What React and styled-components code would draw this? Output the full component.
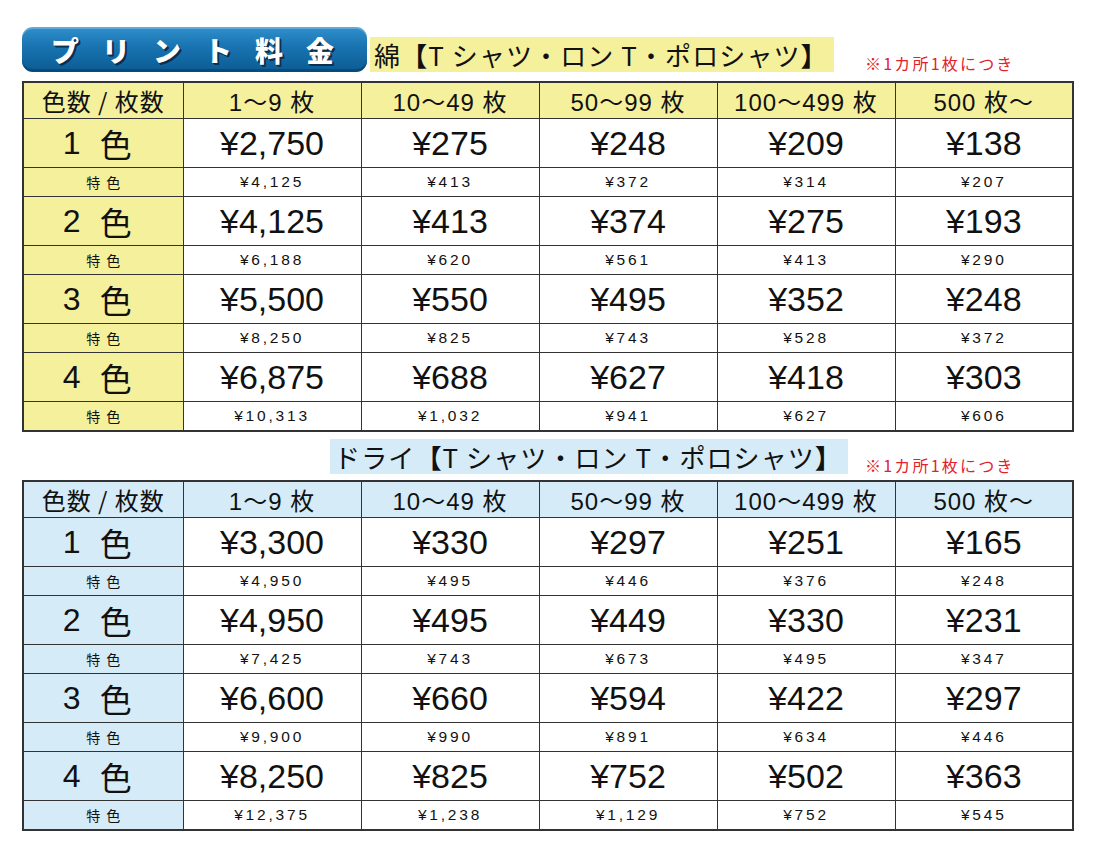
import styled, { createGlobalStyle } from "styled-components";

const GlobalStyle = createGlobalStyle`
  body {
    margin: 0;
    background: #fff;
    font-family: "Liberation Sans", "Noto Sans CJK JP", sans-serif;
    color: #111;
  }
`;

const cols = ["1〜9 枚", "10〜49 枚", "50〜99 枚", "100〜499 枚", "500 枚〜"];

const cotton = [
  { n: 1, main: ["¥2,750", "¥275", "¥248", "¥209", "¥138"], sub: ["¥4,125", "¥413", "¥372", "¥314", "¥207"] },
  { n: 2, main: ["¥4,125", "¥413", "¥374", "¥275", "¥193"], sub: ["¥6,188", "¥620", "¥561", "¥413", "¥290"] },
  { n: 3, main: ["¥5,500", "¥550", "¥495", "¥352", "¥248"], sub: ["¥8,250", "¥825", "¥743", "¥528", "¥372"] },
  { n: 4, main: ["¥6,875", "¥688", "¥627", "¥418", "¥303"], sub: ["¥10,313", "¥1,032", "¥941", "¥627", "¥606"] },
];

const dry = [
  { n: 1, main: ["¥3,300", "¥330", "¥297", "¥251", "¥165"], sub: ["¥4,950", "¥495", "¥446", "¥376", "¥248"] },
  { n: 2, main: ["¥4,950", "¥495", "¥449", "¥330", "¥231"], sub: ["¥7,425", "¥743", "¥673", "¥495", "¥347"] },
  { n: 3, main: ["¥6,600", "¥660", "¥594", "¥422", "¥297"], sub: ["¥9,900", "¥990", "¥891", "¥634", "¥446"] },
  { n: 4, main: ["¥8,250", "¥825", "¥752", "¥502", "¥363"], sub: ["¥12,375", "¥1,238", "¥1,129", "¥752", "¥545"] },
];

const Page = styled.div`
  width: 1051px;
  padding: 27px 0 0 22px;
`;

const TopRow = styled.div`
  display: flex;
  align-items: flex-end;
  padding-right: 58px;
`;

const Banner = styled.div`
  width: 345px;
  height: 45px;
  box-sizing: border-box;
  border-radius: 11px;
  background: linear-gradient(180deg, #2f8fcc 0%, #1873b0 45%, #0b5b93 100%);
  box-shadow: inset 0 -3px 0 rgba(0, 40, 80, 0.35), inset 0 2px 0 rgba(255, 255, 255, 0.25);
  display: flex;
  align-items: center;
  padding-left: 29px;
  color: #fff;
  font-family: "Noto Sans CJK JP", sans-serif;
  font-weight: 900;
  font-size: 28px;
  letter-spacing: 23px;
  text-shadow: 2px 2px 0 #0a2f4f, 1px 1px 0 #0a2f4f;
`;

const Title = styled.div`
  height: 35px;
  display: flex;
  align-items: center;
  padding: 0 6px 0 4px;
  margin-left: ${(p) => p.$gap || 0}px;
  background: ${(p) => p.$bg};
  font-family: "Noto Sans CJK JP", sans-serif;
  font-size: 26px;
  font-weight: 400;
  letter-spacing: 1.1px;
  color: #111;
  white-space: nowrap;
`;

const Bracket = styled.span`
  font-weight: 900;
`;

const Note = styled.div`
  margin-left: ${(p) => (p.$auto ? "auto" : "0")};
  width: 150px;
  font-family: "Noto Sans CJK JP", sans-serif;
  font-size: 16px;
  color: #e3202b;
  letter-spacing: 2.2px;
  line-height: 1;
  padding-bottom: 1px;
  white-space: nowrap;
`;

const SubRow = styled.div`
  display: flex;
  align-items: flex-end;
  justify-content: flex-end;
  gap: 17px;
  margin-top: 7px;
  padding-right: 58px;
`;

const Table = styled.table`
  width: 1051px;
  margin-top: ${(p) => p.$mt}px;
  border-collapse: collapse;
  table-layout: fixed;
  border: 2px solid #333;
`;

const Cell = styled.td`
  border: 1.5px solid #333;
  text-align: center;
  padding: 0;
  background: ${(p) => (p.$shade ? p.$bg : "#fff")};
`;

const HeadCell = styled(Cell)`
  height: 35px;
  font-family: "Liberation Sans", "Noto Sans CJK JP", sans-serif;
  font-size: 24px;
  letter-spacing: 1px;
`;

const MainCell = styled(Cell)`
  height: 48px;
  font-size: 34px;
`;

const SubCell = styled(Cell)`
  height: 28px;
  font-size: 15.5px;
  letter-spacing: 2.8px;
`;

const RowLabel = styled.div`
  display: flex;
  justify-content: center;
  align-items: center;
  gap: 19px;
  font-size: 32px;
  padding-right: 12px;
`;

const LabelChar = styled.span`
  font-family: "Noto Sans CJK JP", sans-serif;
  font-weight: 400;
`;

const Tokushoku = styled.span`
  font-family: "Noto Sans CJK JP", sans-serif;
  font-size: 14px;
  letter-spacing: 6px;
  padding-left: 6px;
`;

const PriceTable = ({ rows, bg, mt }) => (
  <Table $mt={mt}>
    <colgroup>
      <col style={{ width: 160 }} />
      {cols.map((c) => (
        <col key={c} style={{ width: 178 }} />
      ))}
    </colgroup>
    <tbody>
      <tr>
        <HeadCell $shade $bg={bg}>
          <LabelChar>色数 / 枚数</LabelChar>
        </HeadCell>
        {cols.map((c) => (
          <HeadCell key={c} $shade $bg={bg}>
            {c}
          </HeadCell>
        ))}
      </tr>
      {rows.map((r) => [
        <tr key={`m${r.n}`}>
          <MainCell $shade $bg={bg}>
            <RowLabel>
              <span>{r.n}</span>
              <LabelChar>色</LabelChar>
            </RowLabel>
          </MainCell>
          {r.main.map((v, i) => (
            <MainCell key={i}>{v}</MainCell>
          ))}
        </tr>,
        <tr key={`s${r.n}`}>
          <SubCell $shade $bg={bg}>
            <Tokushoku>特色</Tokushoku>
          </SubCell>
          {r.sub.map((v, i) => (
            <SubCell key={i}>{v}</SubCell>
          ))}
        </tr>,
      ])}
    </tbody>
  </Table>
);

const YELLOW = "#f4f09c";
const BLUE = "#d5ebf8";

export default function App() {
  return (
    <Page>
      <GlobalStyle />
      <TopRow>
        <Banner>プリント料金</Banner>
        <Title $bg={YELLOW} $gap={3}>
          綿<Bracket>【</Bracket>T シャツ・ロン T・ポロシャツ<Bracket>】</Bracket>
        </Title>
        <Note $auto>※1カ所1枚につき</Note>
      </TopRow>
      <PriceTable rows={cotton} bg={YELLOW} mt={9} />
      <SubRow>
        <Title $bg={BLUE}>
          ドライ<Bracket>【</Bracket>T シャツ・ロン T・ポロシャツ<Bracket>】</Bracket>
        </Title>
        <Note>※1カ所1枚につき</Note>
      </SubRow>
      <PriceTable rows={dry} bg={BLUE} mt={6} />
    </Page>
  );
}
